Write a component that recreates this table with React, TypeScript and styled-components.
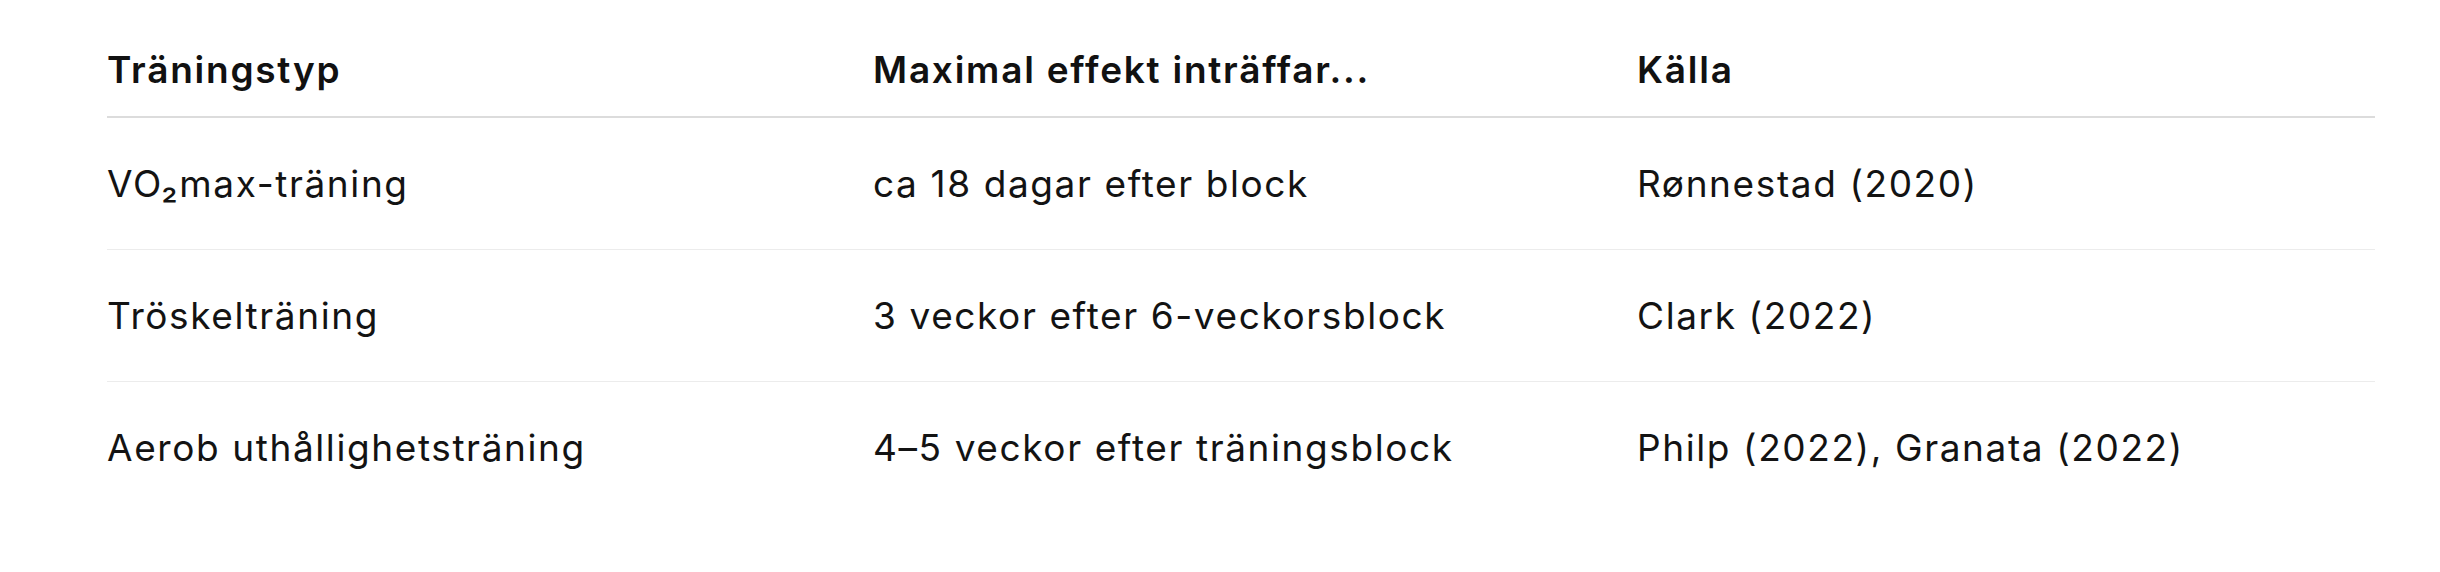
import React from "react";
import styled, { createGlobalStyle } from "styled-components";

const Global = createGlobalStyle`
  html, body { margin: 0; padding: 0; background: #ffffff; }
  body { font-family: Inter, "Noto Sans", "Liberation Sans", sans-serif; color: #141414; }
`;

const Page = styled.div`
  padding: 24px 65px 0 107px;
  background: #ffffff;
`;

const Table = styled.div`
  width: 2268px;
  display: grid;
  grid-template-columns: 766px 764px 1fr;
`;

const HeadCell = styled.div`
  font-size: 37px;
  line-height: 56px;
  font-weight: 600;
  color: #111111;
  padding: 18px 0;
  border-bottom: 2px solid #dcdcdc;
  letter-spacing: 1.75px;
`;

const Cell = styled.div<{ $last?: boolean }>`
  font-size: 37px;
  line-height: 57px;
  font-weight: 400;
  color: #131313;
  padding: 37px 0;
  border-bottom: ${(p) => (p.$last ? "1px solid transparent" : "1px solid #ececec")};
  letter-spacing: 1.6px;
`;

const rows: string[][] = [
  ["VO₂max-träning", "ca 18 dagar efter block", "Rønnestad (2020)"],
  ["Tröskelträning", "3 veckor efter 6-veckorsblock", "Clark (2022)"],
  ["Aerob uthållighetsträning", "4–5 veckor efter träningsblock", "Philp (2022), Granata (2022)"],
];

export default function App() {
  return (
    <>
      <Global />
      <Page>
        <Table>
          <HeadCell>Träningstyp</HeadCell>
          <HeadCell>Maximal effekt inträffar...</HeadCell>
          <HeadCell>Källa</HeadCell>
          {rows.map((r, i) =>
            r.map((c, j) => (
              <Cell key={`${i}-${j}`} $last={i === rows.length - 1}>
                {c}
              </Cell>
            ))
          )}
        </Table>
      </Page>
    </>
  );
}
